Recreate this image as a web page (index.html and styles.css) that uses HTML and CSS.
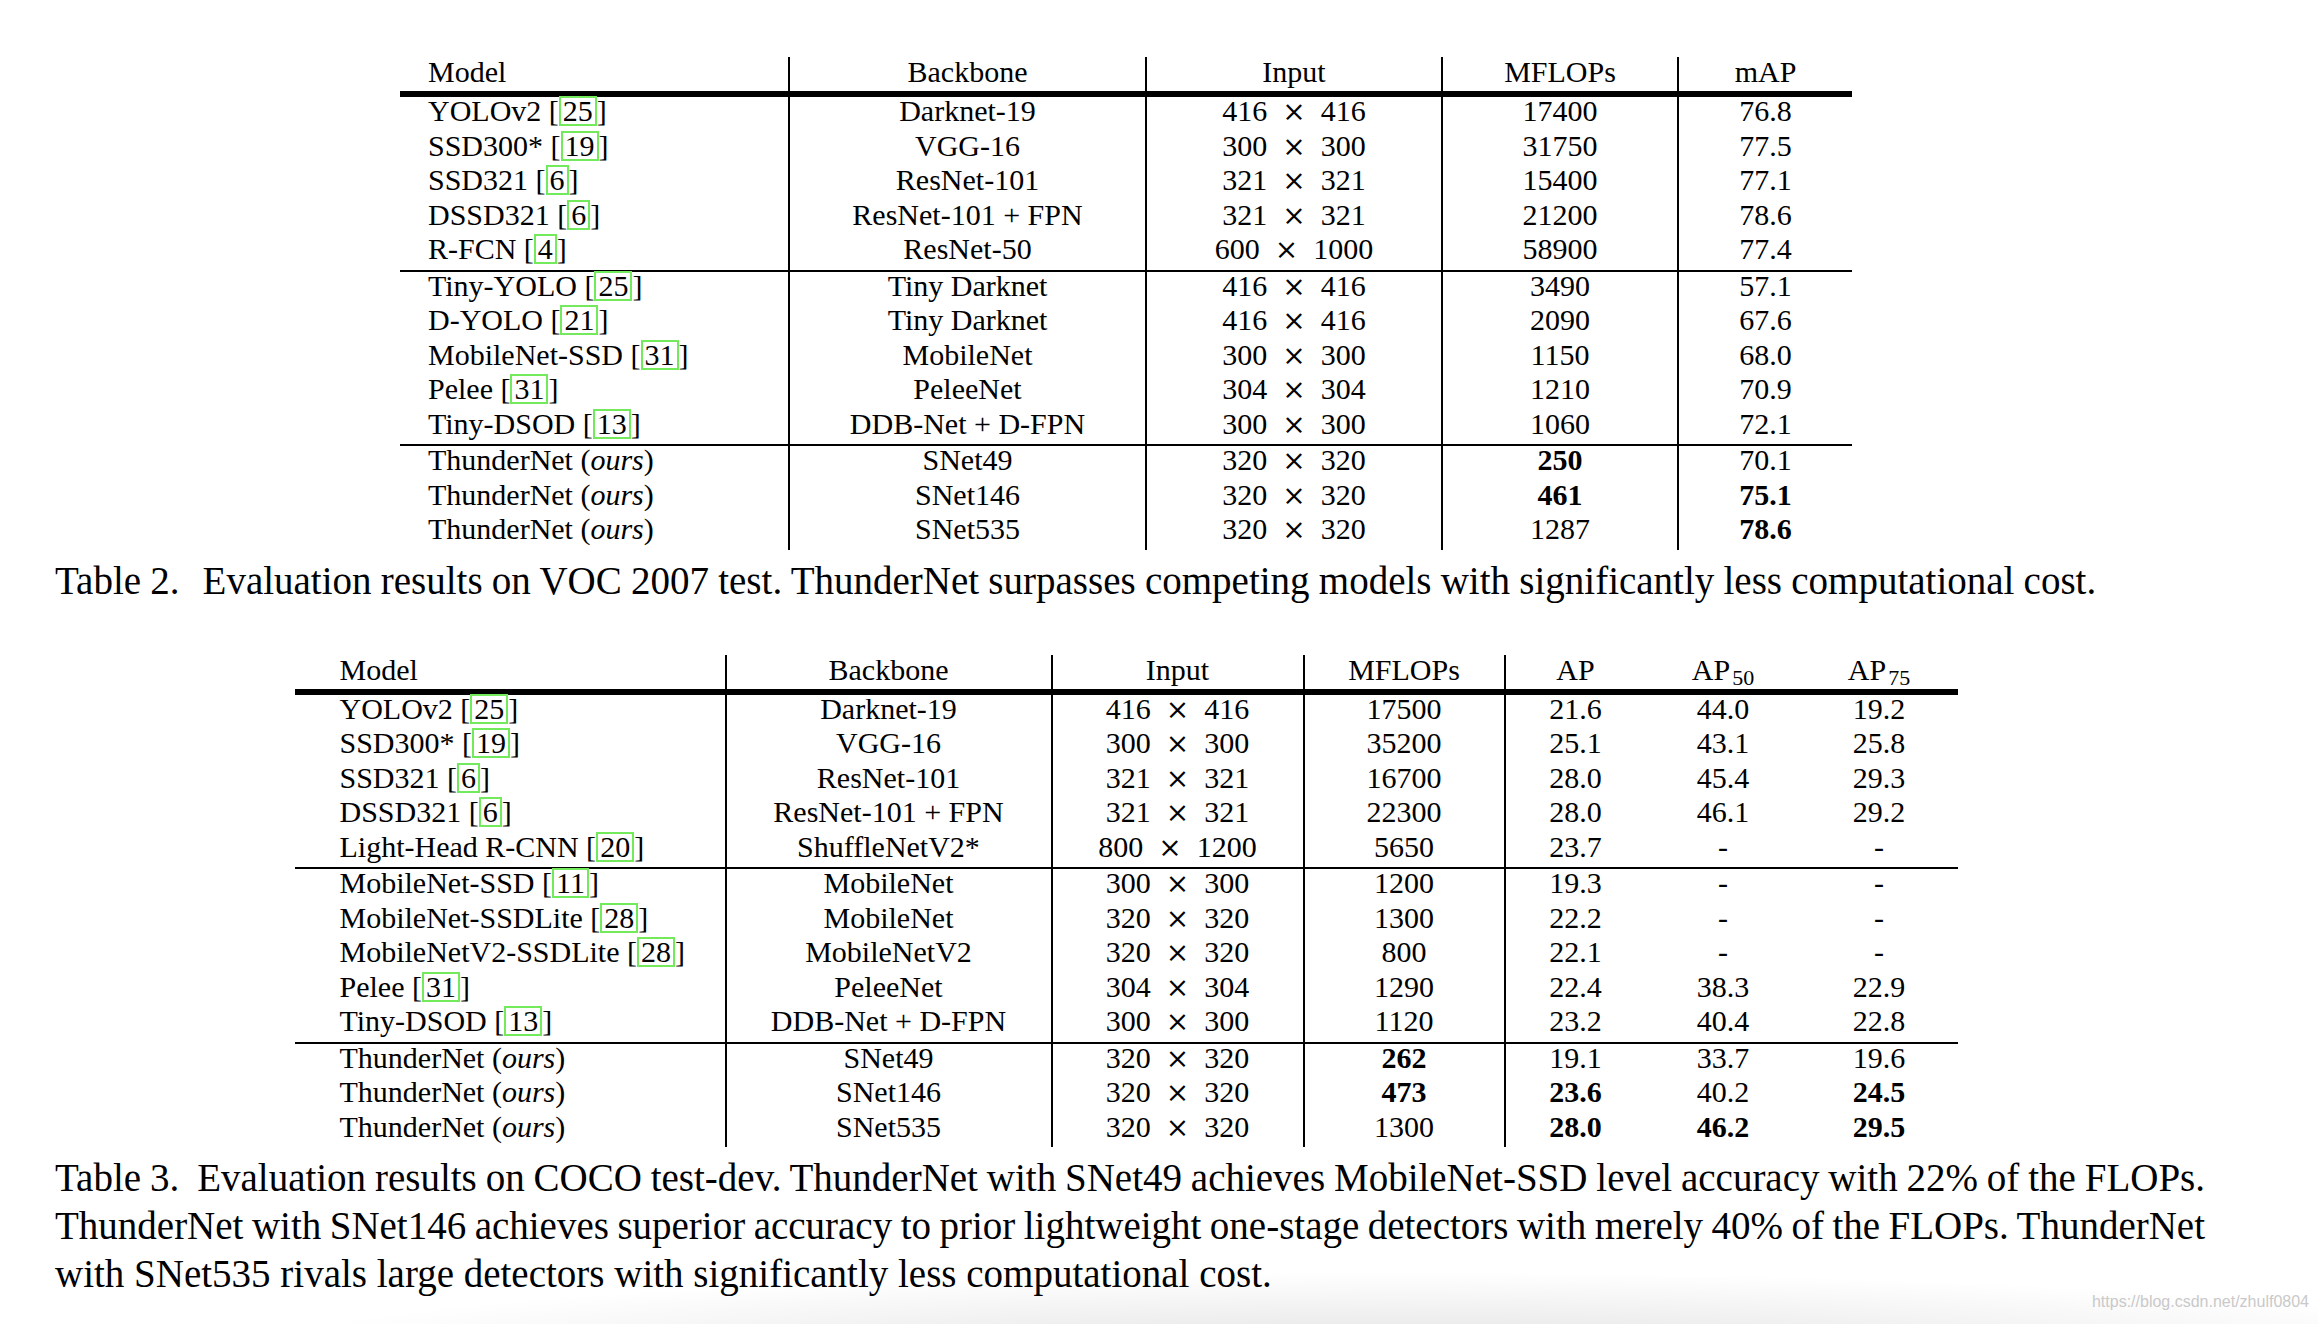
FILE: index.html
```html
<!DOCTYPE html>
<html>
<head>
<meta charset="utf-8">
<link rel="stylesheet" href="styles.css">
</head>
<body>
<div class="page">
  <div class="tbl t2">
    <div class="row head"><div class="m">Model</div><div class="v">Backbone</div><div class="v">Input</div><div class="v">MFLOPs</div><div class="v">mAP</div></div>
    <div class="row"><div class="m">YOLOv2 [<span class="cite">25</span>]</div><div class="v">Darknet-19</div><div class="v">416<span class="x">×</span>416</div><div class="v">17400</div><div class="v">76.8</div></div>
    <div class="row"><div class="m">SSD300* [<span class="cite">19</span>]</div><div class="v">VGG-16</div><div class="v">300<span class="x">×</span>300</div><div class="v">31750</div><div class="v">77.5</div></div>
    <div class="row"><div class="m">SSD321 [<span class="cite">6</span>]</div><div class="v">ResNet-101</div><div class="v">321<span class="x">×</span>321</div><div class="v">15400</div><div class="v">77.1</div></div>
    <div class="row"><div class="m">DSSD321 [<span class="cite">6</span>]</div><div class="v">ResNet-101 + FPN</div><div class="v">321<span class="x">×</span>321</div><div class="v">21200</div><div class="v">78.6</div></div>
    <div class="row"><div class="m">R-FCN [<span class="cite">4</span>]</div><div class="v">ResNet-50</div><div class="v">600<span class="x">×</span>1000</div><div class="v">58900</div><div class="v">77.4</div></div>
    <div class="row gs"><div class="m">Tiny-YOLO [<span class="cite">25</span>]</div><div class="v">Tiny Darknet</div><div class="v">416<span class="x">×</span>416</div><div class="v">3490</div><div class="v">57.1</div></div>
    <div class="row"><div class="m">D-YOLO [<span class="cite">21</span>]</div><div class="v">Tiny Darknet</div><div class="v">416<span class="x">×</span>416</div><div class="v">2090</div><div class="v">67.6</div></div>
    <div class="row"><div class="m">MobileNet-SSD [<span class="cite">31</span>]</div><div class="v">MobileNet</div><div class="v">300<span class="x">×</span>300</div><div class="v">1150</div><div class="v">68.0</div></div>
    <div class="row"><div class="m">Pelee [<span class="cite">31</span>]</div><div class="v">PeleeNet</div><div class="v">304<span class="x">×</span>304</div><div class="v">1210</div><div class="v">70.9</div></div>
    <div class="row"><div class="m">Tiny-DSOD [<span class="cite">13</span>]</div><div class="v">DDB-Net + D-FPN</div><div class="v">300<span class="x">×</span>300</div><div class="v">1060</div><div class="v">72.1</div></div>
    <div class="row gs"><div class="m">ThunderNet (<i>ours</i>)</div><div class="v">SNet49</div><div class="v">320<span class="x">×</span>320</div><div class="v"><b>250</b></div><div class="v">70.1</div></div>
    <div class="row"><div class="m">ThunderNet (<i>ours</i>)</div><div class="v">SNet146</div><div class="v">320<span class="x">×</span>320</div><div class="v"><b>461</b></div><div class="v"><b>75.1</b></div></div>
    <div class="row"><div class="m">ThunderNet (<i>ours</i>)</div><div class="v">SNet535</div><div class="v">320<span class="x">×</span>320</div><div class="v">1287</div><div class="v"><b>78.6</b></div></div>
  </div>

  <div class="cap cap2"><span class="lbl">Table 2.</span>Evaluation results on VOC 2007 test. ThunderNet surpasses competing models with significantly less computational cost.</div>

  <div class="tbl t3">
    <div class="row head"><div class="m">Model</div><div class="v">Backbone</div><div class="v">Input</div><div class="v">MFLOPs</div><div class="v">AP</div><div>AP<span class="sub">50</span></div><div>AP<span class="sub">75</span></div></div>
    <div class="row"><div class="m">YOLOv2 [<span class="cite">25</span>]</div><div class="v">Darknet-19</div><div class="v">416<span class="x">×</span>416</div><div class="v">17500</div><div class="v">21.6</div><div>44.0</div><div>19.2</div></div>
    <div class="row"><div class="m">SSD300* [<span class="cite">19</span>]</div><div class="v">VGG-16</div><div class="v">300<span class="x">×</span>300</div><div class="v">35200</div><div class="v">25.1</div><div>43.1</div><div>25.8</div></div>
    <div class="row"><div class="m">SSD321 [<span class="cite">6</span>]</div><div class="v">ResNet-101</div><div class="v">321<span class="x">×</span>321</div><div class="v">16700</div><div class="v">28.0</div><div>45.4</div><div>29.3</div></div>
    <div class="row"><div class="m">DSSD321 [<span class="cite">6</span>]</div><div class="v">ResNet-101 + FPN</div><div class="v">321<span class="x">×</span>321</div><div class="v">22300</div><div class="v">28.0</div><div>46.1</div><div>29.2</div></div>
    <div class="row"><div class="m">Light-Head R-CNN [<span class="cite">20</span>]</div><div class="v">ShuffleNetV2*</div><div class="v">800<span class="x">×</span>1200</div><div class="v">5650</div><div class="v">23.7</div><div>-</div><div>-</div></div>
    <div class="row gs"><div class="m">MobileNet-SSD [<span class="cite">11</span>]</div><div class="v">MobileNet</div><div class="v">300<span class="x">×</span>300</div><div class="v">1200</div><div class="v">19.3</div><div>-</div><div>-</div></div>
    <div class="row"><div class="m">MobileNet-SSDLite [<span class="cite">28</span>]</div><div class="v">MobileNet</div><div class="v">320<span class="x">×</span>320</div><div class="v">1300</div><div class="v">22.2</div><div>-</div><div>-</div></div>
    <div class="row"><div class="m">MobileNetV2-SSDLite [<span class="cite">28</span>]</div><div class="v">MobileNetV2</div><div class="v">320<span class="x">×</span>320</div><div class="v">800</div><div class="v">22.1</div><div>-</div><div>-</div></div>
    <div class="row"><div class="m">Pelee [<span class="cite">31</span>]</div><div class="v">PeleeNet</div><div class="v">304<span class="x">×</span>304</div><div class="v">1290</div><div class="v">22.4</div><div>38.3</div><div>22.9</div></div>
    <div class="row"><div class="m">Tiny-DSOD [<span class="cite">13</span>]</div><div class="v">DDB-Net + D-FPN</div><div class="v">300<span class="x">×</span>300</div><div class="v">1120</div><div class="v">23.2</div><div>40.4</div><div>22.8</div></div>
    <div class="row gs"><div class="m">ThunderNet (<i>ours</i>)</div><div class="v">SNet49</div><div class="v">320<span class="x">×</span>320</div><div class="v"><b>262</b></div><div class="v">19.1</div><div>33.7</div><div>19.6</div></div>
    <div class="row"><div class="m">ThunderNet (<i>ours</i>)</div><div class="v">SNet146</div><div class="v">320<span class="x">×</span>320</div><div class="v"><b>473</b></div><div class="v"><b>23.6</b></div><div>40.2</div><div><b>24.5</b></div></div>
    <div class="row"><div class="m">ThunderNet (<i>ours</i>)</div><div class="v">SNet535</div><div class="v">320<span class="x">×</span>320</div><div class="v">1300</div><div class="v"><b>28.0</b></div><div><b>46.2</b></div><div><b>29.5</b></div></div>
  </div>

  <div class="cap cap3">
    <div class="jl"><span class="lbl">Table 3.</span>Evaluation results on COCO test-dev. ThunderNet with SNet49 achieves MobileNet-SSD level accuracy with 22% of the FLOPs.</div>
    <div class="jl">ThunderNet with SNet146 achieves superior accuracy to prior lightweight one-stage detectors with merely 40% of the FLOPs. ThunderNet</div>
    <div class="ln">with SNet535 rivals large detectors with significantly less computational cost.</div>
  </div>
</div>
<div class="wm">https://blog.csdn.net/zhulf0804</div>
</body>
</html>
```
FILE: styles.css
```css
html, body {
  margin: 0;
  padding: 0;
}

body {
  width: 2318px;
  height: 1324px;
  position: relative;
  overflow: hidden;
  color: #000;
  font-family: "Liberation Serif", "Times New Roman", serif;
  background:
    radial-gradient(1150px 80px at 1400px 1352px, #e2e2e2 0%, #ececec 35%, rgba(255, 255, 255, 0) 100%) no-repeat,
    #fff;
}

.page {
  width: 2142px;
  padding: 57px 0 0 55px;
}

/* tables */
.tbl {
  margin-left: auto;
  margin-right: auto;
  font-size: 30px;
}

.t2 { width: 1452px; }
.t3 { width: 1663px; margin-top: 50px; }

.row {
  display: grid;
  height: 34.5px;
}

.t2 .row { grid-template-columns: 388px 357px 296px 236px 175px; }
.t3 .row { grid-template-columns: 430px 326px 252px 201px 142px 155px 157px; }

.row.head {
  height: 34px;
  border-bottom: 6px solid #000;
}

.row.gs {
  border-top: 2px solid #000;
}

.row > div {
  line-height: 27px;
  text-align: center;
  white-space: nowrap;
}

.row.head > div {
  line-height: 29px;
}

.row > .m { text-align: left; }
.t2 .m { padding-left: 28px; }
.t3 .m { padding-left: 45px; }

.row > .v {
  border-left: 2px solid #000;
}

.cite {
  display: inline-block;
  height: 26px;
  line-height: 26px;
  margin: -2px 0;
  padding: 0 2px;
  border: 2px solid #72ea5c;
}

.x {
  font-family: "DejaVu Serif", "Liberation Serif", serif;
  font-size: 28px;
  line-height: 0;
  margin: 0 15px;
}

.sub {
  font-size: 22px;
  line-height: 0;
  vertical-align: -5px;
  margin-left: 2px;
}

/* captions */
.cap {
  width: 2150px;
  font-size: 39px;
  line-height: 48px;
}

.cap2 {
  margin-top: 7px;
  white-space: nowrap;
  word-spacing: -0.5px;
}

.cap3 {
  margin-top: 6.5px;
}

.lbl { margin-right: 23px; }
.cap3 .lbl { margin-right: 18px; }

.jl {
  text-align: justify;
  text-align-last: justify;
  word-spacing: -3px;
}

.ln {
  text-align: left;
}

.wm {
  position: absolute;
  right: 9px;
  top: 1294px;
  font-family: "Liberation Sans", Arial, sans-serif;
  font-size: 16px;
  line-height: 16px;
  color: #c9c9c9;
}
```
